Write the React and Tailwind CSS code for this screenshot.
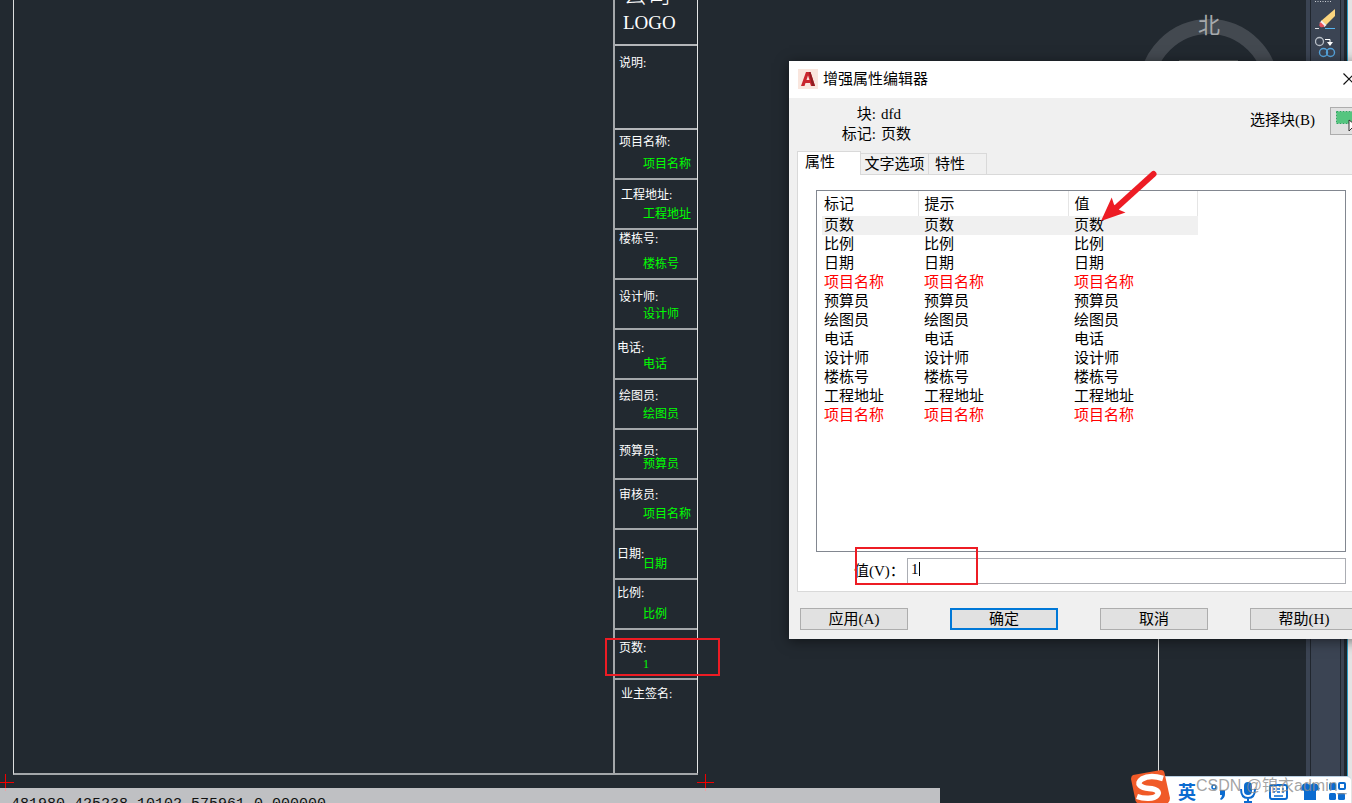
const SONG = "font-['Liberation_Serif','Noto_Sans_CJK_SC',sans-serif] font-normal";

const CELLS = [
  { label: "项目名称:", value: "项目名称", pad: "pt-[4px] pl-[4px]" },
  { label: "工程地址:", value: "工程地址", pad: "pt-[7px] pl-[6px]" },
  { label: "楼栋号:", value: "楼栋号", pad: "pt-[1px] pl-[4px]" },
  { label: "设计师:", value: "设计师", pad: "pt-[9px] pl-[4px]" },
  { label: "电话:", value: "电话", pad: "pt-[10px] pl-[2px]" },
  { label: "绘图员:", value: "绘图员", pad: "pt-[8px] pl-[4px]" },
  { label: "预算员:", value: "预算员", pad: "pt-[13px] pl-[4px]" },
  { label: "审核员:", value: "项目名称", pad: "pt-[7px] pl-[4px]" },
  { label: "日期:", value: "日期", pad: "pt-[16px] pl-[2px]" },
  { label: "比例:", value: "比例", pad: "pt-[5px] pl-[2px]" },
  { label: "页数:", value: "1", pad: "pt-[10px] pl-[4px]" },
];

const ATTRS = [
  ["页数"],
  ["比例"],
  ["日期"],
  ["项目名称", true],
  ["预算员"],
  ["绘图员"],
  ["电话"],
  ["设计师"],
  ["楼栋号"],
  ["工程地址"],
  ["项目名称", true],
];

function Cross({ className }) {
  return (
    <svg className={className} width="17" height="17" viewBox="0 0 17 17" aria-hidden="true">
      <rect x="0" y="8" width="17" height="1" fill="#f00000" />
      <rect x="8" y="0" width="1" height="14" fill="#f00000" />
      <rect x="8" y="14" width="1" height="3" fill="#f0a0a2" />
    </svg>
  );
}

function Sheet() {
  return (
    <div className="ml-[13px] flex w-[685px] border-b-2 border-l border-[#a4a7aa] border-l-[#dcdddd]">
      <div className="flex-1" />
      <div className={`w-[85px] border-x border-l-2 border-[#a4a7aa] border-r-[#e4e5e6] text-xs text-white ${SONG}`}>
        <div className="h-[46px] overflow-hidden border-b-2 border-[#b4b6b9] pl-2">
          <div className="-mt-[17px] text-[24px] leading-[24px] font-light">公司</div>
          <div className="text-[19px] leading-[32px]">LOGO</div>
        </div>
        <div className="h-[84px] border-b-2 border-[#b4b6b9] pt-[9px] pl-[4px] leading-4">说明:</div>
        {CELLS.map((c) => (
          <div key={c.label} className={`relative h-[50px] border-b-2 border-[#a4a7aa] leading-4 ${c.pad}`}>
            {c.label}
            <span className="absolute top-[26px] left-7 whitespace-nowrap text-[#00ff00]">{c.value}</span>
          </div>
        ))}
        <div className="h-[93px] pt-[6px] pl-[6px] leading-4">业主签名:</div>
      </div>
    </div>
  );
}

function Compass() {
  return (
    <svg className="absolute top-0 left-[1139px]" width="140" height="70" viewBox="0 0 140 70" aria-hidden="true">
      <circle cx="70" cy="89" r="62.5" fill="none" stroke="#434950" strokeWidth="15" />
      <path d="M40 60.5H99" stroke="#555a5c" />
      <text x="70" y="33" textAnchor="middle" fontSize="22" fill="#a6a9ac" fontFamily="Noto Sans CJK SC, sans-serif">
        北
      </text>
    </svg>
  );
}

function ToolPalette() {
  return (
    <aside className="flex w-[46px] shrink-0 bg-[#20262d]">
      <div className="w-[38px] bg-[#3b4453] pl-1">
        <div className="h-full w-[31px] border-x border-[#20262e] pl-1">
          <svg width="22" height="60" viewBox="0 0 22 60" aria-hidden="true">
            <path d="M0 1.5H17" stroke="#c9cdd3" strokeDasharray="1 1.5" />
            <path d="M20 9v7l-9 9-5-4z" fill="#fbd57e" />
            <path d="M6.500 20.500l5 4.500-2 2-5-4z" fill="#f3f3f3" />
            <path d="M5.500 22l4 4q-2 2-4 1t-1-3z" fill="#e8505b" />
            <path d="M0 28.500h4" stroke="#dce0e4" />
            <path d="M10 28.500h10" stroke="#56b4ee" />
            <circle cx="4.500" cy="41.500" r="4" fill="none" stroke="#b8bec6" strokeWidth="1.300" />
            <path d="M10 39.500h5v3" fill="none" stroke="#fff" />
            <path d="M12 42h6l-3 4z" fill="#fff" />
            <circle cx="8.500" cy="52.500" r="4" fill="none" stroke="#56a4dc" strokeWidth="1.400" />
            <circle cx="15.500" cy="52.500" r="4" fill="none" stroke="#56a4dc" strokeWidth="1.400" />
          </svg>
        </div>
      </div>
      <div className="ml-[3px] w-px bg-[#2c9cc4]" />
      <div className="flex-1 bg-[#e4e4e4]" />
    </aside>
  );
}

function Dialog() {
  const button = "h-[22px] w-[108px] border bg-[#e1e1e1] text-center leading-[18px]";
  return (
    <section
      aria-label="增强属性编辑器"
      className={`absolute top-[61px] left-[789px] w-[582px] bg-[#f0f0f0] text-[15px] text-black shadow-[0_2px_12px_rgba(0,0,0,0.5)] ${SONG}`}
    >
      <header className="flex h-[37px] items-center bg-white pr-4 pb-0.5 pl-[9px]">
        <svg width="20" height="20" viewBox="0 0 20 20" aria-hidden="true">
          <rect width="20" height="20" fill="#f9e6de" />
          <path d="M3 17L8 3h4.500l4.500 14h-4l-1-3H7.500l-1 3z" fill="#c9252d" />
          <path d="M10 6.500l1.500 4.500H8.500z" fill="#f9e6de" />
          <path d="M11 3h1.500l4.500 14h-3z" fill="#8f1d22" />
        </svg>
        <h1 className="ml-[5px] font-['Noto_Sans_CJK_SC',sans-serif] font-normal">增强属性编辑器</h1>
        <button aria-label="关闭" className="ml-auto">
          <svg width="12" height="12" viewBox="0 0 12 12" aria-hidden="true">
            <path d="M0.500 0.500l11 11M11.500 0.500l-11 11" stroke="#111" strokeWidth="1.200" />
          </svg>
        </button>
      </header>

      <div className="flex h-[53px] items-start pt-1.5 leading-5">
        <dl className="grid grid-cols-[87px_auto] gap-x-[5px]">
          <dt className="text-right">块:</dt>
          <dd>dfd</dd>
          <dt className="text-right">标记:</dt>
          <dd>页数</dd>
        </dl>
        <label htmlFor="pick" className="mt-1.5 ml-auto w-20">选择块(B)</label>
        <button id="pick" className="mt-[3px] mr-[13px] h-7 w-7 border border-[#adadad] bg-[#e1e1e1]">
          <svg width="26" height="26" viewBox="0 0 26 26" aria-hidden="true">
            <rect x="5.500" y="3.500" width="16" height="12" fill="#55c57f" stroke="#e1e1e1" />
            <rect x="5.500" y="3.500" width="16" height="12" fill="none" stroke="#2fa760" strokeDasharray="2 1" />
            <path d="M18 12v11l3-3 2 4 2-1-2-4h4z" fill="#fff" stroke="#333" />
          </svg>
        </button>
      </div>

      <div className="mx-2">
        <div role="tablist" className="flex items-end leading-5">
          <button role="tab" aria-selected="true" className="relative z-10 -mb-px h-6 w-16 border border-b-0 border-[#d9d9d9] bg-white pb-1 pl-[7px] text-left leading-[18px]">
            属性
          </button>
          <button role="tab" aria-selected="false" className="h-[21px] w-[68px] border-t border-r border-[#d9d9d9] text-center leading-[18px]">
            文字选项
          </button>
          <button role="tab" aria-selected="false" className="h-[21px] w-[58px] border-t border-r border-[#d9d9d9] pl-1.5 text-left leading-[18px]">
            特性
          </button>
        </div>
        <div className="border border-[#d9d9d9] bg-white pt-[15px] pr-4 pb-[7px] pl-[18px]">
          <div className="h-[362px] border border-[#828790] pl-[5px]">
            <table className="w-[376px] table-fixed border-collapse">
              <thead>
                <tr className="h-[25px] text-left leading-5">
                  <th className="w-24 border-r border-[#e5e5e5] p-0 pl-0.5 font-normal">标记</th>
                  <th className="w-[150px] border-r border-[#e5e5e5] p-0 pl-1.5 font-normal">提示</th>
                  <th className="border-r border-[#e5e5e5] p-0 pl-1.5 font-normal">值</th>
                </tr>
              </thead>
              <tbody>
                {ATTRS.map(([name, red], i) => (
                  <tr key={i} className={`h-[19px] leading-[19px] ${i === 0 ? "bg-[#f0f0f0]" : ""} ${red ? "text-[#ff0000]" : ""}`}>
                    <td className="p-0 pl-0.5">{name}</td>
                    <td className="p-0 pl-1.5">{name}</td>
                    <td className="p-0 pl-1.5">{name}</td>
                  </tr>
                ))}
              </tbody>
            </table>
          </div>
          <div className="relative mt-1.5 flex items-center">
            <label htmlFor="val" className="w-[91px] pl-[38px] whitespace-nowrap">值(V)：</label>
            <input id="val" defaultValue="1" className="h-[26px] min-w-0 flex-1 border border-[#abadb3] bg-white px-[3px] pb-1 outline-none" />
            <span className="absolute top-1 left-[103px] h-[14px] w-px bg-black" />
            <span className="pointer-events-none absolute -top-[11px] left-[39px] h-[38px] w-[123px] border-2 border-[#ed1c24]" />
          </div>
        </div>
      </div>

      <footer className="flex gap-[42px] pt-4 pb-[9px] pl-[11px]">
        <button className={`${button} border-[#adadad]`}>应用(A)</button>
        <button className="h-[22px] w-[108px] border-2 border-[#0078d7] bg-[#e1e1e1] text-center leading-4">确定</button>
        <button className={`${button} border-[#adadad]`}>取消</button>
        <button className={`${button} border-[#adadad]`}>帮助(H)</button>
      </footer>

      <svg className="pointer-events-none absolute top-[108px] left-[311px]" width="58" height="56" viewBox="0 0 58 56" aria-hidden="true">
        <path d="M53.500 5L16 39" stroke="#ed1c24" strokeWidth="6" strokeLinecap="round" />
        <path d="M1 52L11.700 28.500 14 35.500 19.500 41 25.500 43.500z" fill="#ed1c24" />
      </svg>
    </section>
  );
}

function InputMethodBar() {
  return (
    <div className="absolute bottom-0 left-[1130px] flex h-[33px] w-[221px] items-end">
      <div className="ml-6 flex h-[27px] flex-1 items-center rounded-tr border-t border-[#b9cfe2] bg-white pt-1 pl-6">
        <span className="w-[33px] pb-0.5 font-['Noto_Sans_CJK_SC',sans-serif] text-[18px] leading-6 font-bold text-[#0b6bd0]">英</span>
        <svg width="140" height="24" viewBox="0 0 140 24" aria-hidden="true" fill="#0b6bd0">
          <circle cx="3" cy="7" r="2" fill="none" stroke="#0b6bd0" strokeWidth="1.500" />
          <path d="M9 10h5v4q0 4-4 6l-1-1q2-2 2-4H9z" />
          <rect x="33" y="2" width="8" height="13" rx="4" />
          <path d="M30 9q0 9 7 9t7-9M37 18v4M33 22h8" fill="none" stroke="#0b6bd0" strokeWidth="2" />
          <rect x="59" y="5" width="17" height="14" rx="2" fill="none" stroke="#0b6bd0" strokeWidth="2" />
          <path d="M62 9h2m2 0h3m2 0h2M62 12h2m2 0h3m2 0h2M63 16h9" stroke="#0b6bd0" strokeWidth="1.500" />
          <path d="M92 4l4-1q3 3 6 0l4 1 3 5-4 2v9H93v-9l-4-2z" />
          <rect x="118" y="3" width="7" height="7" rx="1.500" />
          <rect x="128" y="3" width="6" height="6" rx="1" fill="none" stroke="#0b6bd0" strokeWidth="2" />
          <rect x="118" y="13" width="7" height="7" rx="1.500" />
          <rect x="127" y="13" width="7" height="7" rx="1.500" />
        </svg>
      </div>
      <svg className="absolute top-0 left-0" width="42" height="33" viewBox="0 0 42 33" aria-hidden="true">
        <path d="M3 5L31 0q3 0 3.500 3L40 28q0 3-2 5H7Q5 31 5 28L1 9q0-3 2-4z" fill="#f05a28" />
        <path d="M33 8.500Q20 4.500 12 9c-7 5-1 9 7 9.500s11 3.500 8 7-13 3.500-20 1" fill="none" stroke="#fff" strokeWidth="5.500" />
      </svg>
      <span className="absolute bottom-[5px] left-[66px] font-['Liberation_Sans','Noto_Sans_CJK_SC',sans-serif] text-base leading-6 whitespace-nowrap text-[#8c8c8c]/80">
        CSDN @锦衣admin_
      </span>
    </div>
  );
}

export default function App() {
  return (
    <div className="relative flex h-screen overflow-hidden bg-[#222930]">
      <main className="flex min-w-0 flex-1 flex-col">
        <div className="relative flex-1">
          <Sheet />
          <Cross className="absolute -bottom-[3px] -left-[3px]" />
          <Cross className="absolute -bottom-[3px] left-[697px]" />
          <span className="absolute top-[638px] left-[605px] h-[38px] w-[115px] border-2 border-[#ed1c24]" />
          <span className="absolute top-[600px] bottom-0 left-[1158px] w-px bg-[#dcdddd]" />
          <Compass />
        </div>
        <div className="h-[15px] w-[940px] overflow-hidden bg-[#bfc0c3] pt-[9px] pl-[11px] font-['Liberation_Mono',monospace] text-[15px] leading-4 whitespace-nowrap text-[#111]">
          481980.425238,10102.575961,0.000000
        </div>
      </main>
      <ToolPalette />
      <Dialog />
      <InputMethodBar />
    </div>
  );
}
